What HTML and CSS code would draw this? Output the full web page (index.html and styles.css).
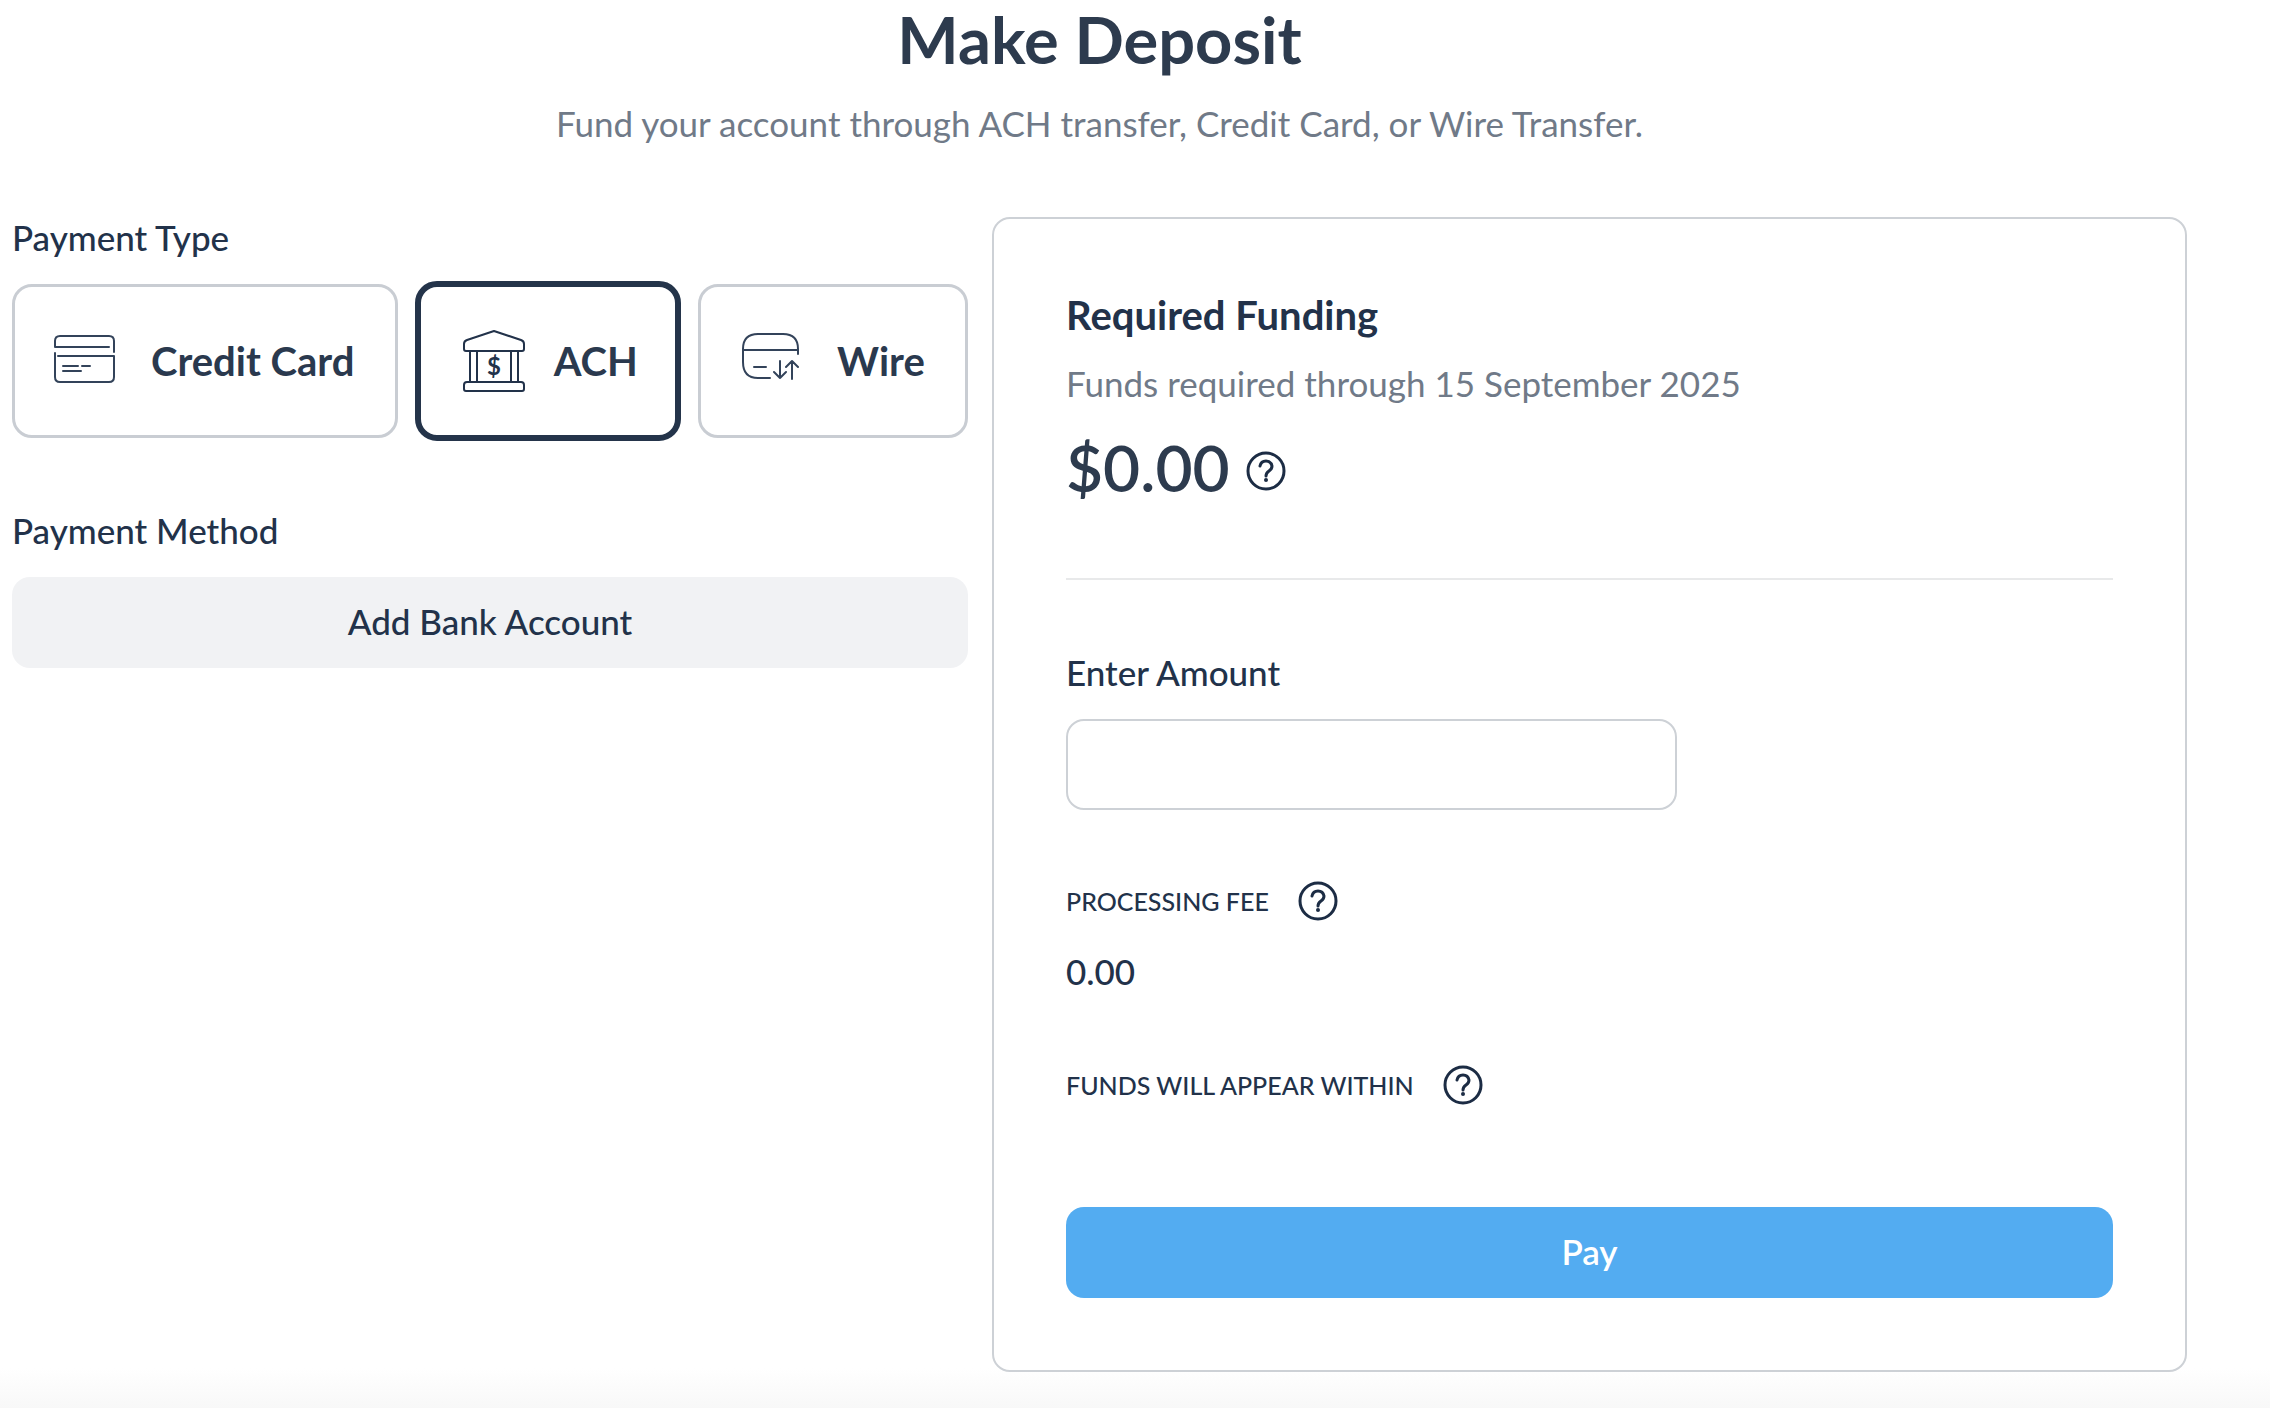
FILE: index.html
```html
<!DOCTYPE html>
<html lang="en">
<head>
  <meta charset="UTF-8" />
  <meta name="viewport" content="width=device-width, initial-scale=1" />
  <title>Make Deposit</title>
  <link rel="stylesheet" href="styles.css">
</head>
<body>
  <header class="page-header">
    <h1>Make Deposit</h1>
    <p>Fund your account through ACH transfer, Credit Card, or Wire Transfer.</p>
  </header>

  <main class="deposit">
    <section class="payment">
      <h2 class="label" id="typeLabel">Payment Type</h2>
      <div class="types" role="group" aria-labelledby="typeLabel">
        <button type="button" class="type" aria-pressed="false">
          <svg class="type-icon" viewBox="0 0 68 68" aria-hidden="true">
            <path d="M55 20H1V14q0-5 5-5h49q5 0 5 5v11" />
            <path d="M4 29h56v21q0 5-5 5H6q-5 0-5-5V26" />
            <path d="M9 39h15M28 39h8M9 44h18" />
          </svg>
          Credit Card
        </button>
        <button type="button" class="type active" aria-pressed="true">
          <svg class="type-icon bold" viewBox="0 0 68 68" aria-hidden="true">
            <path d="M37 4L10 13q-3 1-3 4v5q0 2 2 2h56q2 0 2-2v-5q0-3-3-4z" />
            <path d="M13 24v31M20 24v31M54 24v31M61 24v31" />
            <path d="M10 55h54q3 0 3 3v4q0 2-2 2H9q-2 0-2-2v-4q0-3 3-3z" />
            <text x="37" y="48" text-anchor="middle">$</text>
          </svg>
          ACH
        </button>
        <button type="button" class="type" aria-pressed="false">
          <svg class="type-icon" viewBox="0 0 68 68" aria-hidden="true">
            <path d="M30 51H18Q3 51 3 35V22Q3 7 18 7h25q15 0 15 15v5M3 23h55" />
            <path d="M14 40h12M40 34v17M34 45l6 6 6-6M52 52V34M46 40l6-6 6 6" />
          </svg>
          Wire
        </button>
      </div>

      <h2 class="label">Payment Method</h2>
      <button type="button" class="btn btn-light">Add Bank Account</button>
    </section>

    <form class="card">
      <h2 class="card-title">Required Funding</h2>
      <p class="muted">Funds required through 15 September 2025</p>
      <div class="total">
        <span>$0.00</span>
        <button type="button" class="help" aria-label="About required funding">
          <svg viewBox="0 0 40 40" aria-hidden="true">
            <circle cx="20" cy="20" r="18" />
            <path d="M14 15q1-5 6-5t6 5q0 3-3 5t-3 5" />
            <circle class="dot" cx="20" cy="29" r="2" />
          </svg>
        </button>
      </div>

      <hr>

      <label class="label" for="amount">Enter Amount</label>
      <input type="text" id="amount" inputmode="decimal">

      <div class="info">
        <span>PROCESSING FEE</span>
        <button type="button" class="help" aria-label="About the processing fee">
          <svg viewBox="0 0 40 40" aria-hidden="true">
            <circle cx="20" cy="20" r="18" />
            <path d="M14 15q1-5 6-5t6 5q0 3-3 5t-3 5" />
            <circle class="dot" cx="20" cy="29" r="2" />
          </svg>
        </button>
      </div>
      <p class="value">0.00</p>

      <div class="info">
        <span>FUNDS WILL APPEAR WITHIN</span>
        <button type="button" class="help" aria-label="About funding times">
          <svg viewBox="0 0 40 40" aria-hidden="true">
            <circle cx="20" cy="20" r="18" />
            <path d="M14 15q1-5 6-5t6 5q0 3-3 5t-3 5" />
            <circle class="dot" cx="20" cy="29" r="2" />
          </svg>
        </button>
      </div>

      <button type="button" class="btn btn-primary">Pay</button>
    </form>
  </main>
</body>
</html>
```
FILE: styles.css
```css
* {
  box-sizing: border-box;
}

body {
  margin: 0;
  min-height: 100vh;
  padding: 0 83px 36px 12px;
  font-family: Lato, 'Open Sans', sans-serif;
  font-size: 35px;
  line-height: 40px;
  color: #22324a;
  background: linear-gradient(0deg, #f8f8f8, #fff 40px);
}

h1,
h2,
p {
  margin: 0;
}

button,
input {
  font: inherit;
  color: inherit;
}

button {
  cursor: pointer;
}

.page-header {
  text-align: center;
}

.page-header h1 {
  font-size: 65px;
  line-height: 78px;
  font-weight: 700;
  color: #2d3b4e;
}

.page-header p {
  margin-top: 25px;
  color: #707a88;
}

.deposit {
  display: grid;
  grid-template-columns: 4fr 5fr;
  gap: 24px;
  margin-top: 74px;
}

.label {
  display: block;
  margin-bottom: 27px;
  font-size: 35px;
  font-weight: 500;
}

/* payment type */
.types {
  display: flex;
  gap: 20px;
  margin-bottom: 72px;
}

.type {
  flex: 1 1 auto;
  display: flex;
  align-items: center;
  gap: 29px;
  padding: 40px 39px;
  border: 3px solid #c9cdd3;
  border-radius: 20px;
  background: #fff;
  font-size: 40px;
  font-weight: 700;
  white-space: nowrap;
  color: #2a394e;
}

.type.active {
  margin: -3px;
  padding: 40px 36px;
  border: 6px solid #24344a;
  border-radius: 22px;
}

.type-icon {
  width: 68px;
  height: 68px;
  overflow: visible;
  fill: none;
  stroke: #33435a;
  stroke-width: 2;
  stroke-linecap: round;
  stroke-linejoin: round;
}

.type-icon.bold {
  stroke: #22324a;
}

.type-icon text {
  font-size: 24px;
  font-weight: 700;
  fill: #22324a;
  stroke: none;
}

/* buttons */
.btn {
  display: block;
  width: 100%;
  height: 91px;
  padding: 0 0 3px;
  border: 0;
  border-radius: 18px;
  font-weight: 500;
}

.btn-light {
  background: #f1f2f4;
}

.btn-primary {
  margin-top: 102px;
  background: #53acf1;
  color: #fff;
  font-weight: 600;
}

/* funding card */
.card {
  padding: 72px;
  border: 2px solid #cdd1d6;
  border-radius: 18px;
  background: #fff;
}

.card-title {
  font-size: 40px;
  line-height: 48px;
  font-weight: 700;
}

.muted {
  margin-top: 24px;
  color: #707a88;
}

.total {
  display: flex;
  align-items: center;
  gap: 16px;
  margin-top: 28px;
  font-size: 64px;
  line-height: 74px;
  font-weight: 600;
  color: #2d3b4e;
}

.total .help {
  padding-top: 6px;
}

.card hr {
  height: 2px;
  margin: 73px 0 72px;
  border: 0;
  background: #e8e9ea;
}

.card input {
  display: block;
  width: calc(100% * 7 / 12);
  height: 91px;
  padding: 0 24px;
  border: 2px solid #cdd1d6;
  border-radius: 18px;
  background: #fff;
}

.info {
  display: flex;
  align-items: center;
  gap: 29px;
  margin-top: 71px;
  font-size: 25px;
  font-weight: 500;
}

.value {
  margin: 30px 0 74px;
  font-weight: 500;
}

.help {
  display: flex;
  padding: 0;
  border: 0;
  background: none;
}

.help svg {
  width: 40px;
  height: 40px;
  fill: none;
  stroke: #1c2c44;
  stroke-width: 3;
  stroke-linecap: round;
}

.help .dot {
  fill: #1c2c44;
  stroke: none;
}
```
